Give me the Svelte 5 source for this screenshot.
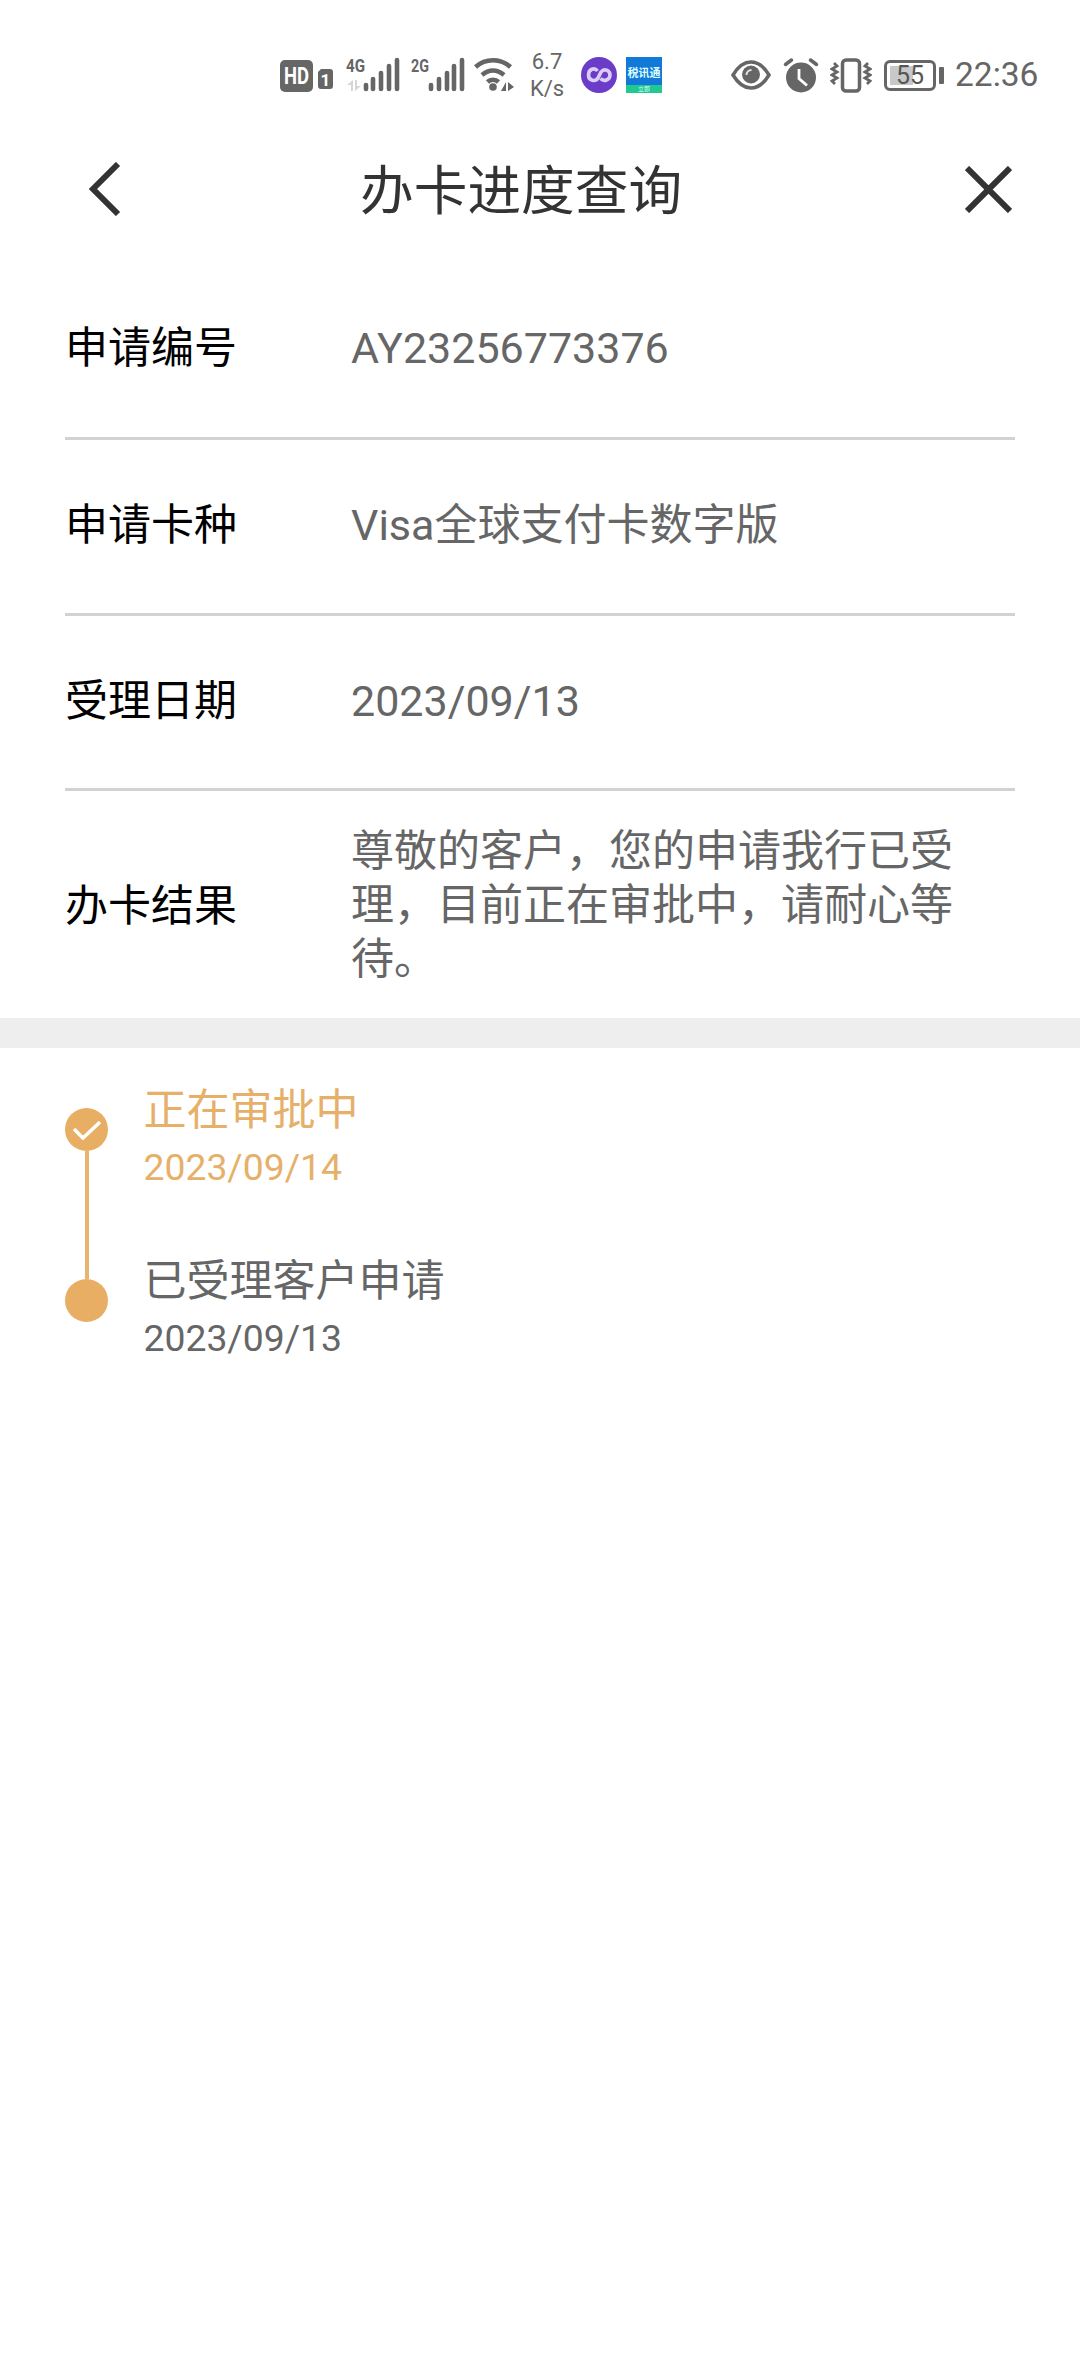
<script>
  const rows = [
    { label: '申请编号', value: 'AY23256773376' },
    { label: '申请卡种', value: 'Visa全球支付卡数字版' },
    { label: '受理日期', value: '2023/09/13' },
  ];

  const steps = [
    { title: '正在审批中', date: '2023/09/14', active: true },
    { title: '已受理客户申请', date: '2023/09/13', active: false },
  ];
</script>

<div class="page">
  <div class="status">
    <svg class="hd" width="53" height="36" viewBox="0 0 53 36">
      <rect x="0" y="3" width="33" height="32" rx="5" fill="#666" />
      <text x="16.5" y="27" class="hd-text" text-anchor="middle" textLength="25" lengthAdjust="spacingAndGlyphs">HD</text>
      <path d="M38 15l3-3h9a3 3 0 0 1 3 3v14a3 3 0 0 1-3 3h-9a3 3 0 0 1-3-3z" fill="#666" />
      <text x="45.5" y="29" class="hd-num" text-anchor="middle">1</text>
    </svg>
    <svg class="sig4" width="54" height="40" viewBox="0 -4 54 40">
      <text x="0" y="15" class="net" textLength="19" lengthAdjust="spacingAndGlyphs">4G</text>
      <path d="M7 23v11H5v-6H1zM9 34V23h2v6h4z" fill="#d5d5d5" />
      <path d="M20 32v-4M27 32v-10M35 32v-16M43 32v-23M51 32v-29" stroke="#666" stroke-width="4.6" stroke-linecap="round" />
    </svg>
    <svg class="sig2" width="54" height="40" viewBox="0 -4 54 40">
      <text x="0" y="15" class="net" textLength="18" lengthAdjust="spacingAndGlyphs">2G</text>
      <path d="M20 32v-4M28 32v-10M36 32v-16M43 32v-23M51 32v-29" stroke="#666" stroke-width="4.6" stroke-linecap="round" />
    </svg>
    <svg class="wifi" width="40" height="36" viewBox="0 0 40 36" fill="none" stroke="#666" stroke-width="4.6">
      <path d="M1.500 10c10-9 25-9 35 0" />
      <path d="M8 18c7-6 15-6 22 0" />
      <path d="M13.500 25c3-3 8-3 11 0" />
      <circle cx="19" cy="30" r="3.800" fill="#666" stroke="none" />
      <path d="M32 25v9h-5zM34 25v9l6-4z" fill="#666" stroke="none" />
    </svg>
    <div class="speed">6.7<br />K/s</div>
    <svg class="app1" width="36" height="36" viewBox="0 0 36 36" fill="none">
      <circle cx="18" cy="18" r="18" fill="#6a3cc8" />
      <path d="M16.500 14c-3-4-9-2-9 4s7 7 9.500 3l3-6c3-4 9-2 9 3s-6 7-9.500 3.500" stroke="#dccdf6" stroke-width="3.600" />
    </svg>
    <div class="app2">
      <span class="app2-top">税讯通</span>
      <span class="app2-bot">立即</span>
    </div>
    <svg class="eye" width="40" height="30" viewBox="0 0 40 30" fill="none">
      <path d="M2 15C8 5 14 2 20 2s12 3 18 13c-6 10-12 13-18 13S8 25 2 15z" stroke="#666" stroke-width="3.500" />
      <circle cx="20" cy="14.500" r="9" fill="#666" />
      <path d="M15.500 15a5 5 0 0 1 5-5" stroke="#e8e8e8" stroke-width="2" />
    </svg>
    <svg class="alarm" width="36" height="36" viewBox="0 0 36 36" fill="none">
      <circle cx="18" cy="20.500" r="15" fill="#666" />
      <path d="M2.500 7.500l6-4.500M33.500 7.500l-6-4.500" stroke="#666" stroke-width="3.500" stroke-linecap="round" />
      <path d="M16 12v9.500l8 7" stroke="#fff" stroke-width="2.800" />
    </svg>
    <svg class="vib" width="42" height="36" viewBox="0 0 42 36" fill="none" stroke="#666">
      <rect x="12.500" y="3" width="17" height="31" rx="3.500" stroke-width="3.500" />
      <path d="M4 6l3 3-5 3 5 3-5 3 5 3-5 3 3 3" stroke-width="2.800" />
      <path d="M38 6l-3 3 5 3-5 3 5 3-5 3 5 3-3 3" stroke-width="2.800" />
    </svg>
    <div class="battery">
      <div class="battery-body">
        <div class="battery-fill"></div>
        <span class="battery-num">55</span>
      </div>
      <div class="battery-tip"></div>
    </div>
    <div class="clock">22:36</div>
  </div>

  <div class="nav">
    <svg class="back" width="33" height="54" viewBox="0 0 33 54" fill="none">
      <path d="M30 2L5 27l25 25" stroke="#333" stroke-width="6" />
    </svg>
    <div class="title">办卡进度查询</div>
    <svg class="close" width="47" height="47" viewBox="0 0 47 47" fill="none">
      <path d="M2 2l43 43M45 2L2 45" stroke="#333" stroke-width="6" />
    </svg>
  </div>

  <div class="info">
    {#each rows as row}
      <div class="row">
        <div class="label">{row.label}</div>
        <div class="value">{row.value}</div>
      </div>
    {/each}
    <div class="row last">
      <div class="label">办卡结果</div>
      <div class="value">尊敬的客户，您的申请我行已受理，目前正在审批中，请耐心等待。</div>
    </div>
  </div>

  <div class="band"></div>

  <div class="steps">
    {#each steps as step, i}
      <div class="step" class:active={step.active}>
        <div class="marker">
          <div class="dot">
            {#if step.active}
              <svg width="30" height="24" viewBox="0 0 30 24" fill="none">
                <path d="M2 11l9 9L28 4" stroke="#fff" stroke-width="3.500" />
              </svg>
            {/if}
          </div>
          {#if i < steps.length - 1}
            <div class="line"></div>
          {/if}
        </div>
        <div class="text">
          <div class="step-title">{step.title}</div>
          <div class="step-date">{step.date}</div>
        </div>
      </div>
    {/each}
  </div>
</div>

<style>
  :global(body) {
    margin: 0;
    background: #fff;
  }

  .page {
    width: 1080px;
    height: 2376px;
    background: #fff;
    overflow: hidden;
    font-family: Roboto, "Noto Sans CJK SC", sans-serif;
  }

  .status {
    box-sizing: border-box;
    height: 110px;
    padding: 40px 0 0 280px;
    display: flex;
    align-items: center;
    color: #666;
  }

  .hd { margin-right: 13px; }
  .sig4 { margin: -4px 11px 0 0; }
  .sig2 { margin: -4px 9px 0 0; }
  .wifi { margin-right: 13px; }

  .hd-text {
    font: 700 24px Roboto, sans-serif;
    fill: #fff;
  }

  .hd-num {
    font: 700 17px Roboto, sans-serif;
    fill: #fff;
  }

  .net {
    font: 700 19px Roboto, sans-serif;
    fill: #666;
  }

  .speed {
    width: 40px;
    font-size: 22px;
    line-height: 27px;
    text-align: center;
    margin-right: 14px;
  }

  .app1 { margin-right: 9px; }

  .app2 {
    width: 36px;
    height: 36px;
    background: linear-gradient(#1279d8 78%, #1fc98f 78%);
    color: #dff;
    display: flex;
    flex-direction: column;
    align-items: center;
    margin-right: 69px;
    overflow: hidden;
  }

  .app2-top {
    font-size: 11px;
    line-height: 11px;
    margin-top: 11px;
    font-weight: 700;
    white-space: nowrap;
  }

  .app2-bot {
    font-size: 6px;
    line-height: 8px;
    margin-top: 6px;
  }

  .eye { margin-right: 12px; }
  .alarm { margin-right: 11px; }
  .vib { margin-right: 12px; }

  .battery {
    display: flex;
    align-items: center;
    gap: 3px;
    margin-right: 11px;
  }

  .battery-body {
    position: relative;
    width: 52px;
    height: 31px;
    box-sizing: border-box;
    border: 3px solid #666;
    border-radius: 6px;
    display: flex;
    align-items: center;
    justify-content: center;
  }

  .battery-fill {
    position: absolute;
    left: 3px;
    top: 3px;
    bottom: 3px;
    width: 23px;
    background: #c8c8c8;
  }

  .battery-num {
    position: relative;
    font-size: 25px;
    line-height: 25px;
    color: #555;
  }

  .battery-tip {
    width: 5px;
    height: 17px;
    background: #666;
    border-radius: 1px;
  }

  .clock {
    font-size: 33.500px;
    line-height: 36px;
    color: #666;
  }

  .nav {
    box-sizing: border-box;
    height: 154.5px;
    padding: 4px 68px 0 88px;
    display: flex;
    align-items: center;
  }

  .title {
    margin: 6px 0 0 239px;
    font-size: 53.700px;
    line-height: 60px;
    color: #333;
  }

  .close {
    margin-left: auto;
  }

  .info {
    padding: 0 65px;
  }

  .row {
    box-sizing: border-box;
    height: 175.5px;
    padding-bottom: 2px;
    border-bottom: 3px solid #d2d2d2;
    display: flex;
    align-items: center;
    font-size: 43px;
    line-height: 54px;
  }

  .row:first-child {
    padding-bottom: 5px;
  }

  .row.last {
    height: 227px;
    padding-bottom: 0;
    border-bottom: none;
  }

  .row.last .label {
    margin-top: 3px;
  }

  .label {
    width: 286px;
    flex: none;
    color: #000;
  }

  .value {
    color: #666;
    flex: 1;
  }

  .band {
    height: 30px;
    background: #eee;
  }

  .steps {
    padding: 35px 65px 0;
  }

  .step {
    display: flex;
    height: 171px;
    color: #666;
  }

  .step.active {
    color: #e6b06a;
  }

  .marker {
    width: 43px;
    margin-right: 35.500px;
    flex: none;
    display: flex;
    flex-direction: column;
    align-items: center;
    padding-top: 25px;
  }

  .dot {
    width: 43px;
    height: 43px;
    border-radius: 50%;
    background: #e8ae63;
    display: flex;
    align-items: center;
    justify-content: center;
    flex: none;
  }

  .line {
    width: 4px;
    flex: 1;
    margin-bottom: -25px;
    background: #e6b56f;
  }

  .step-title {
    font-size: 43px;
    line-height: 54px;
  }

  .step-date {
    font-size: 37.300px;
    line-height: 44px;
    margin-top: 8px;
  }
</style>
